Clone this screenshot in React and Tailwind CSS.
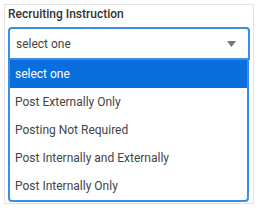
import React from "react";

const options = [
  "select one",
  "Post Externally Only",
  "Posting Not Required",
  "Post Internally and Externally",
  "Post Internally Only",
];

export default function App() {
  return (
    <div className="relative w-[262px] h-[210px] bg-white overflow-hidden font-['Roboto',sans-serif]">
      {/* card */}
      <div className="absolute left-[4px] top-[4px] w-[250px] h-[200px] border border-[#e3e3e3]">
        <div className="px-[3px] text-[12px] font-medium text-[#333] leading-[18px]">
          Recruiting Instruction
        </div>
        <div className="mx-[3px] mt-[4px] h-[33px] border-2 border-[#3b8ee8] rounded-t-[4px] flex items-center justify-between pl-[6px] pr-[12px]">
          <span className="text-[12px] text-[#444]">select one</span>
          <svg width="9" height="6" viewBox="0 0 9 6">
            <path d="M0 0 H9 L4.5 6 Z" fill="#777" />
          </svg>
        </div>
      </div>

      {/* open list */}
      <ul className="absolute left-[8px] top-[60px] w-[241px] h-[142px] bg-white border-2 border-t-0 border-[#3b8ee8] rounded-b-[4px] overflow-hidden">
        {options.map((o, i) => (
          <li
            key={o}
            className={
              i === 0
                ? "h-[28px] flex items-center pl-[5px] text-[12px] bg-[#0a6fdc] text-white"
                : "h-[28px] flex items-center pl-[5px] text-[12px] text-[#444]"
            }
          >
            {o}
          </li>
        ))}
      </ul>
    </div>
  );
}
